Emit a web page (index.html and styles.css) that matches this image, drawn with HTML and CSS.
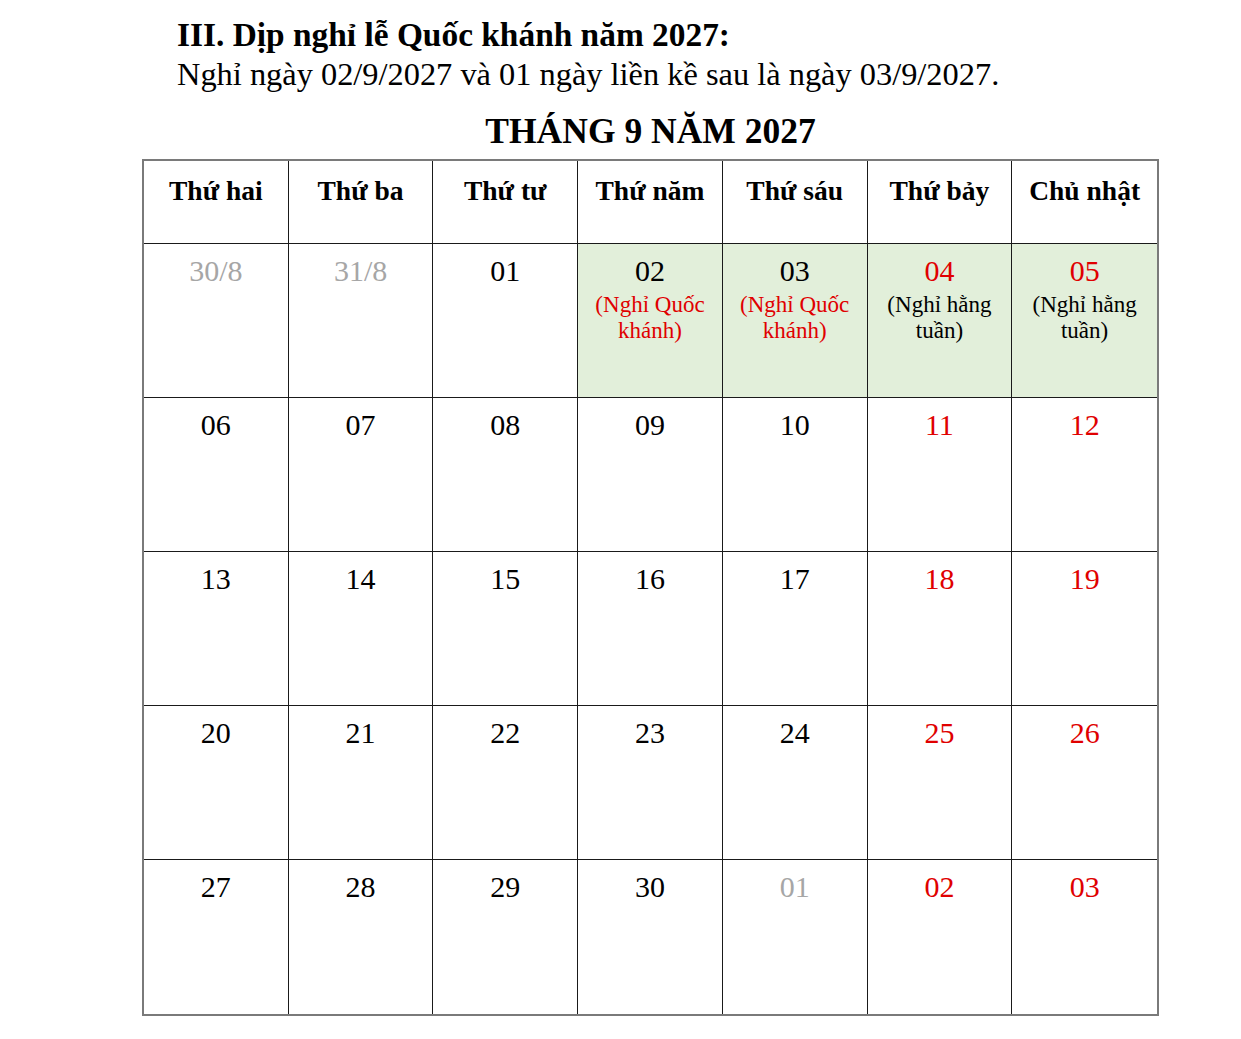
FILE: index.html
```html
<!DOCTYPE html>
<html lang="vi">
<head>
<meta charset="utf-8">
<link rel="stylesheet" href="styles.css">
</head>
<body>
<div class="page">
  <div class="intro">
    <h1 class="heading">III. Dịp nghỉ lễ Quốc khánh năm 2027:</h1>
    <p class="lead">Nghỉ ngày 02/9/2027 và 01 ngày liền kề sau là ngày 03/9/2027.</p>
  </div>
  <h2 class="month">THÁNG 9 NĂM 2027</h2>
  <div class="cal">
    <div class="hd">Thứ hai</div>
    <div class="hd">Thứ ba</div>
    <div class="hd">Thứ tư</div>
    <div class="hd">Thứ năm</div>
    <div class="hd">Thứ sáu</div>
    <div class="hd">Thứ bảy</div>
    <div class="hd">Chủ nhật</div>

    <div class="day"><span class="num muted">30/8</span></div>
    <div class="day"><span class="num muted">31/8</span></div>
    <div class="day"><span class="num">01</span></div>
    <div class="day hol"><span class="num">02</span><span class="note red">(Nghỉ Quốc khánh)</span></div>
    <div class="day hol"><span class="num">03</span><span class="note red">(Nghỉ Quốc khánh)</span></div>
    <div class="day hol"><span class="num red">04</span><span class="note">(Nghỉ hằng tuần)</span></div>
    <div class="day hol"><span class="num red">05</span><span class="note">(Nghỉ hằng tuần)</span></div>

    <div class="day"><span class="num">06</span></div>
    <div class="day"><span class="num">07</span></div>
    <div class="day"><span class="num">08</span></div>
    <div class="day"><span class="num">09</span></div>
    <div class="day"><span class="num">10</span></div>
    <div class="day"><span class="num red">11</span></div>
    <div class="day"><span class="num red">12</span></div>

    <div class="day"><span class="num">13</span></div>
    <div class="day"><span class="num">14</span></div>
    <div class="day"><span class="num">15</span></div>
    <div class="day"><span class="num">16</span></div>
    <div class="day"><span class="num">17</span></div>
    <div class="day"><span class="num red">18</span></div>
    <div class="day"><span class="num red">19</span></div>

    <div class="day"><span class="num">20</span></div>
    <div class="day"><span class="num">21</span></div>
    <div class="day"><span class="num">22</span></div>
    <div class="day"><span class="num">23</span></div>
    <div class="day"><span class="num">24</span></div>
    <div class="day"><span class="num red">25</span></div>
    <div class="day"><span class="num red">26</span></div>

    <div class="day"><span class="num">27</span></div>
    <div class="day"><span class="num">28</span></div>
    <div class="day"><span class="num">29</span></div>
    <div class="day"><span class="num">30</span></div>
    <div class="day"><span class="num muted">01</span></div>
    <div class="day"><span class="num red">02</span></div>
    <div class="day"><span class="num red">03</span></div>
  </div>
</div>
</body>
</html>
```
FILE: styles.css
```css
html, body {
  margin: 0;
  padding: 0;
  background: #fff;
}
body {
  font-family: "Liberation Serif", "Times New Roman", serif;
  color: #000;
}
.page {
  padding: 16px 0 0 0;
  width: 1241px;
}
.intro {
  padding-left: 177px;
}
.heading {
  margin: 0;
  font-family: "Liberation Serif", "Times New Roman", serif;
  font-size: 33.4px;
  font-weight: bold;
  line-height: 38px;
}
.lead {
  margin: 0;
  font-family: "Liberation Serif", "Times New Roman", serif;
  font-size: 32.4px;
  line-height: 40px;
}
.month {
  margin: 15px 0 0 0;
  text-align: center;
  font-family: "Liberation Serif", "Times New Roman", serif;
  font-size: 35.5px;
  line-height: 44px;
  font-weight: bold;
  padding-left: 60px;
}
.cal {
  margin: 6px 0 0 142px;
  display: grid;
  grid-template-columns: repeat(7, 1fr);
  grid-template-rows: 83px repeat(5, 154px);
  width: 1017px;
  border: 2px solid #7a7a7a;
  box-sizing: border-box;
}
.hd, .day {
  border-right: 1px solid #1a1a1a;
  border-bottom: 1px solid #1a1a1a;
  text-align: center;
  font-family: "Liberation Serif", "Times New Roman", serif;
}
.hd:nth-child(7n), .day:nth-child(7n) {
  border-right: none;
}
.day:nth-last-child(-n+7) {
  border-bottom: none;
}
.hd {
  font-weight: bold;
  font-size: 27.5px;
  line-height: 30px;
  padding-top: 15px;
}
.day {
  display: flex;
  flex-direction: column;
  align-items: center;
  padding-top: 10px;
}
.hol {
  background: #e2efda;
}
.num {
  font-size: 30px;
  line-height: 34px;
}
.note {
  font-size: 23px;
  line-height: 26px;
  width: 124px;
  margin-top: 4px;
}
.red {
  color: #e00000;
}
.muted {
  color: #a6a6a6;
}
```
